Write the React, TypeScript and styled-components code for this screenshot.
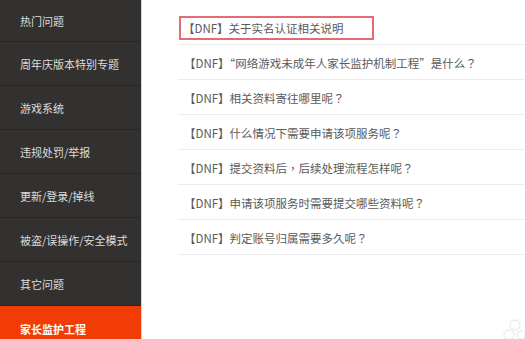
import React from "react";
import styled, { createGlobalStyle } from "styled-components";

const Global = createGlobalStyle`
  html, body { margin: 0; padding: 0; background: #fff; }
  body { font-family: "Noto Sans CJK SC", "Noto Sans", sans-serif; overflow: hidden; }
  #root { width: 525px; height: 339px; }
`;

const Page = styled.div`
  display: flex;
  width: 525px;
  height: 339px;
  overflow: hidden;
  position: relative;
`;

const Sidebar = styled.nav`
  width: 141px;
  flex: none;
  background: #33312f;
  border-right: 1px solid #d6d6d6;
  display: flex;
  flex-direction: column;
  overflow: hidden;
`;

const NavItem = styled.div<{ $active?: boolean; $first?: boolean }>`
  height: ${(p) => (p.$first ? 41 : 44)}px;
  box-sizing: border-box;
  flex: none;
  display: flex;
  align-items: center;
  padding-left: 20px;
  font-size: 11px;
  color: ${(p) => (p.$active ? "#fff" : "#dcdcdc")};
  font-weight: ${(p) => (p.$active ? 700 : 400)};
  background: ${(p) => (p.$active ? "#f13d05" : "transparent")};
  border-top: ${(p) => (p.$first ? "none" : "1px solid #282625")};
  padding-top: ${(p) => (p.$first ? 0 : p.$active ? 3 : 1)}px;
`;

const Main = styled.main`
  flex: 1;
  padding: 10px 0 0 36px;
`;

const List = styled.ul`
  list-style: none;
  margin: 0;
  padding: 0;
`;

const Row = styled.li`
  border-bottom: 1px solid #ececec;
  display: flex;
  align-items: center;
  padding-top: 1px;
  box-sizing: border-box;
  height: 35px;
`;

const Link = styled.a<{ $boxed?: boolean }>`
  font-size: 11.5px;
  color: #5a5a5a;
  text-decoration: none;
  white-space: nowrap;
  display: inline-flex;
  align-items: center;
  ${(p) =>
    p.$boxed
      ? `
    margin-left: 1px;
    border: 2px solid #e56a72;
    width: 195px;
    height: 24px;
    box-sizing: border-box;
    padding-left: 2px;
  `
      : `padding-left: 6px;`}
`;

const Punct = styled.span`
  font-family: "Noto Sans CJK TC", "Noto Sans CJK SC", sans-serif;
`;

const Watermark = styled.svg`
  position: absolute;
  right: 0;
  bottom: 0;
`;

const navItems = [
  "热门问题",
  "周年庆版本特别专题",
  "游戏系统",
  "违规处罚/举报",
  "更新/登录/掉线",
  "被盗/误操作/安全模式",
  "其它问题",
  "家长监护工程",
];

const questions = [
  "【DNF】关于实名认证相关说明",
  "【DNF】“网络游戏未成年人家长监护机制工程”是什么？",
  "【DNF】相关资料寄往哪里呢？",
  "【DNF】什么情况下需要申请该项服务呢？",
  "【DNF】提交资料后，后续处理流程怎样呢？",
  "【DNF】申请该项服务时需要提交哪些资料呢？",
  "【DNF】判定账号归属需要多久呢？",
];

function renderText(q: string) {
  return q.split(/([？，])/).map((part, i) =>
    part === "？" || part === "，" ? (
      <Punct key={i}>{part}</Punct>
    ) : (
      <React.Fragment key={i}>{part}</React.Fragment>
    )
  );
}

export default function App() {
  return (
    <Page>
      <Global />
      <Sidebar>
        {navItems.map((t, i) => (
          <NavItem key={t} $first={i === 0} $active={i === navItems.length - 1}>
            {t}
          </NavItem>
        ))}
      </Sidebar>
      <Main>
        <List>
          {questions.map((q, i) => (
            <Row key={q}>
              <Link href="#" $boxed={i === 0}>
                {renderText(q)}
              </Link>
            </Row>
          ))}
        </List>
      </Main>
      <Watermark width="24" height="22" viewBox="0 0 24 22">
        <g fill="none" stroke="#ececec" strokeWidth="1.3">
          <circle cx="14" cy="8" r="5" />
          <circle cx="8" cy="18" r="5" />
          <circle cx="20" cy="18" r="4" />
        </g>
      </Watermark>
    </Page>
  );
}
